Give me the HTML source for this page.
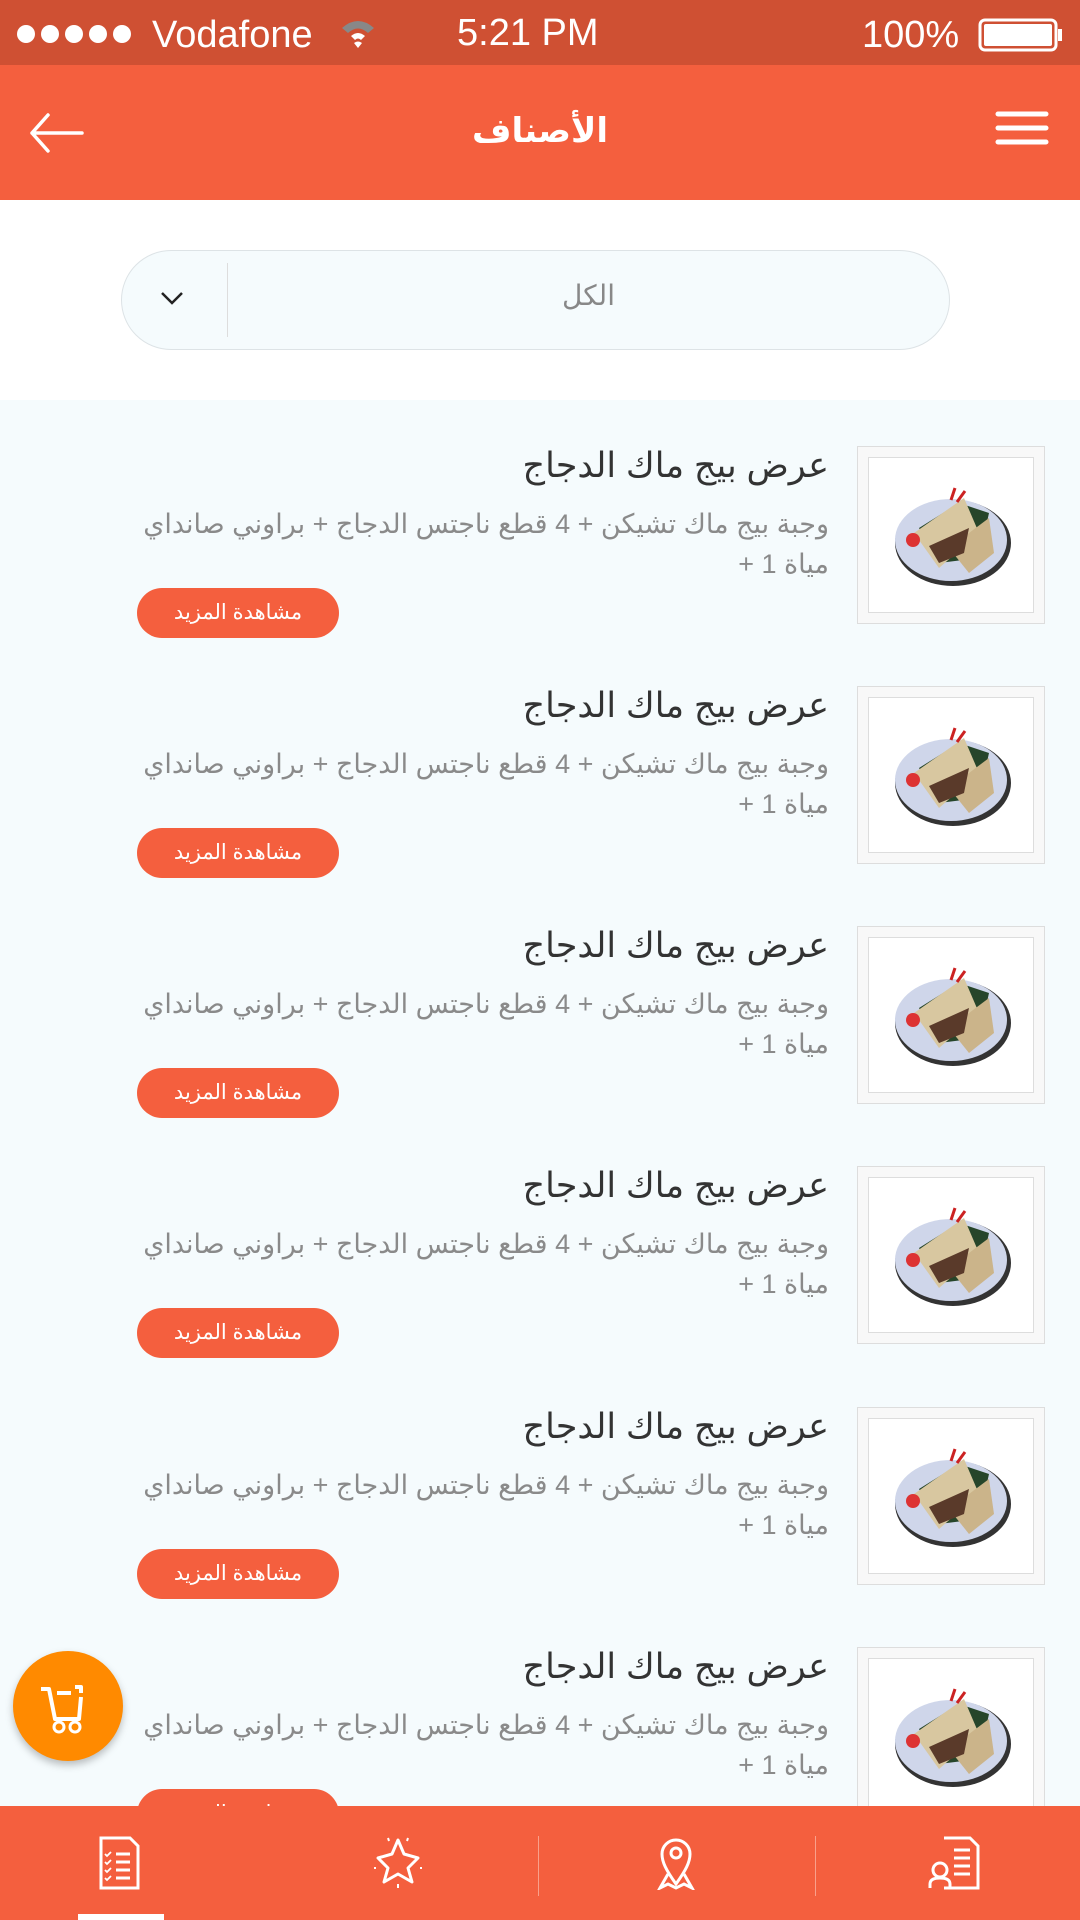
<!DOCTYPE html>
<html><head><meta charset="utf-8"><style>
*{margin:0;padding:0;box-sizing:border-box}
body{width:1080px;height:1920px;overflow:hidden;background:#f5fbfd;font-family:"Liberation Sans","DejaVu Sans",sans-serif;position:relative}
.sb{position:absolute;left:0;top:0;width:1080px;height:65px;background:#cf5033;color:#fff;font-size:38px}
.hd{position:absolute;left:0;top:65px;width:1080px;height:135px;background:#f45f3e}
.wh{position:absolute;left:0;top:200px;width:1080px;height:200px;background:#fff}
.dd{position:absolute;left:121px;top:250px;width:829px;height:100px;border:1.5px solid #dde3e6;border-radius:50px;background:#f5fbfd}
.item{position:absolute;left:0;width:1080px;height:240px}
.img{position:absolute;left:857px;top:0;width:188px;height:178px;border:1.5px solid #ddd;background:#f8f8f8}
.img .in{position:absolute;left:10px;top:10px;width:166px;height:156px;border:1.5px solid #ddd;background:#fff}
.t{position:absolute;right:251px;top:0;font-size:35px;color:#333;direction:rtl;white-space:nowrap}
.d{position:absolute;right:251px;top:58px;width:720px;font-size:27px;line-height:40px;color:#8a8a8a;direction:rtl;text-align:right}
.b{position:absolute;left:137px;top:142px;width:202px;height:50px;border-radius:25px;background:#f45f3e;color:#fff;font-size:21px;text-align:center;line-height:50px;direction:rtl}
.nav{position:absolute;left:0;top:1806px;width:1080px;height:114px;background:#f45f3e}
</style></head><body>
<div class="sb">
<svg style="position:absolute;left:14px;top:22px" width="120" height="24"><g fill="#fff"><circle cx="12" cy="12" r="9"/><circle cx="36" cy="12" r="9"/><circle cx="60" cy="12" r="9"/><circle cx="84" cy="12" r="9"/><circle cx="108" cy="12" r="9"/></g></svg>
<span style="position:absolute;left:152px;top:14px">Vodafone</span>
<svg style="position:absolute;left:340px;top:18px" width="36" height="32"><path d="M2 10 Q18 -4 34 10 L28 15 Q18 6 8 15Z" fill="#888"/><path d="M11 18 Q18 12 25 18 L21 22 Q18 19 15 22Z" fill="#fff"/><path d="M14 25 L18 30 L22 25 Q18 22 14 25Z" fill="#fff"/></svg>
<span style="position:absolute;left:457px;top:12px">5:21 PM</span>
<span style="position:absolute;left:862px;top:14px">100%</span>
<svg style="position:absolute;left:978px;top:18px" width="86" height="34"><rect x="2" y="2" width="76" height="30" rx="5" fill="none" stroke="#fff" stroke-width="3"/><rect x="6" y="6" width="68" height="22" rx="2" fill="#fff"/><rect x="80" y="11" width="4" height="12" fill="#fff"/></svg>
</div>
<div class="hd">
<svg style="position:absolute;left:28px;top:48px" width="56" height="40"><path d="M54 20H4M20 2 4 20 20 38" fill="none" stroke="#fff" stroke-width="3.5" stroke-linecap="round" stroke-linejoin="round"/></svg>
<div style="position:absolute;left:0;width:1080px;top:46px;text-align:center;color:#fff;font-size:34px;font-weight:bold;font-family:'DejaVu Sans',sans-serif">الأصناف</div>
<svg style="position:absolute;left:994px;top:45px" width="56" height="44"><g stroke="#fff" stroke-width="5" stroke-linecap="round"><path d="M4 4H52M4 18H52M4 32H52"/></g></svg>
</div>
<div class="wh"><div class="dd" style="top:50px">
<div style="position:absolute;left:105px;top:12px;width:1px;height:74px;background:#ddd"></div>
<svg style="position:absolute;left:38px;top:40px" width="24" height="16"><path d="M2 2 12 12 22 2" fill="none" stroke="#222" stroke-width="2.5"/></svg>
<div style="position:absolute;left:106px;right:0;top:28px;text-align:center;font-size:28px;color:#888">الكل</div>
</div></div>

<svg width="0" height="0" style="position:absolute"><defs><g id="food"><ellipse cx="84" cy="85" rx="58" ry="43" fill="#333"/><ellipse cx="82" cy="82" rx="56" ry="41" fill="#cfd6ea"/><path d="M50 70 L90 45 L120 55 L110 100 L70 105Z" fill="#26452a"/><path d="M45 75 L95 40 L110 75 L70 110Z" fill="#d8c7a0"/><path d="M80 90 L120 60 L125 95 L100 115Z" fill="#cbb48a"/><path d="M60 88 L100 70 L95 95 L70 105Z" fill="#5a3a2a"/><circle cx="44" cy="82" r="7" fill="#d33"/><path d="M82 42 L86 30 M88 44 L96 33" stroke="#c22" stroke-width="3"/></g></defs></svg>

<div class="item" style="top:446px"><div class="img"><div class="in"><svg width="166" height="156"><use href="#food"/></svg></div></div><div class="t">عرض بيج ماك الدجاج</div><div class="d">وجبة بيج ماك تشيكن + 4 قطع ناجتس الدجاج + براوني صانداي مياة 1 +</div><div class="b">مشاهدة المزيد</div></div>
<div class="item" style="top:686px"><div class="img"><div class="in"><svg width="166" height="156"><use href="#food"/></svg></div></div><div class="t">عرض بيج ماك الدجاج</div><div class="d">وجبة بيج ماك تشيكن + 4 قطع ناجتس الدجاج + براوني صانداي مياة 1 +</div><div class="b">مشاهدة المزيد</div></div>
<div class="item" style="top:926px"><div class="img"><div class="in"><svg width="166" height="156"><use href="#food"/></svg></div></div><div class="t">عرض بيج ماك الدجاج</div><div class="d">وجبة بيج ماك تشيكن + 4 قطع ناجتس الدجاج + براوني صانداي مياة 1 +</div><div class="b">مشاهدة المزيد</div></div>
<div class="item" style="top:1166px"><div class="img"><div class="in"><svg width="166" height="156"><use href="#food"/></svg></div></div><div class="t">عرض بيج ماك الدجاج</div><div class="d">وجبة بيج ماك تشيكن + 4 قطع ناجتس الدجاج + براوني صانداي مياة 1 +</div><div class="b">مشاهدة المزيد</div></div>
<div class="item" style="top:1407px"><div class="img"><div class="in"><svg width="166" height="156"><use href="#food"/></svg></div></div><div class="t">عرض بيج ماك الدجاج</div><div class="d">وجبة بيج ماك تشيكن + 4 قطع ناجتس الدجاج + براوني صانداي مياة 1 +</div><div class="b">مشاهدة المزيد</div></div>
<div class="item" style="top:1647px"><div class="img"><div class="in"><svg width="166" height="156"><use href="#food"/></svg></div></div><div class="t">عرض بيج ماك الدجاج</div><div class="d">وجبة بيج ماك تشيكن + 4 قطع ناجتس الدجاج + براوني صانداي مياة 1 +</div><div class="b">مشاهدة المزيد</div></div>

<div style="position:absolute;left:13px;top:1651px;width:110px;height:110px;border-radius:50%;background:#ff8a00;box-shadow:0 4px 8px rgba(0,0,0,.25)">
<svg style="position:absolute;left:24px;top:30px" width="60" height="54"><path d="M4 8H12L18 38H42L44 16 M20 12H34 M38 6H44V12" fill="none" stroke="#fff" stroke-width="4" stroke-linejoin="round"/><circle cx="22" cy="46" r="5" fill="none" stroke="#fff" stroke-width="3"/><circle cx="38" cy="46" r="5" fill="none" stroke="#fff" stroke-width="3"/></svg>
</div>

<div class="nav">
<div style="position:absolute;left:538px;top:30px;width:1px;height:60px;background:#f9a08b"></div>
<div style="position:absolute;left:815px;top:30px;width:1px;height:60px;background:#f9a08b"></div>
<svg style="position:absolute;left:98px;top:30px" width="44" height="54"><path d="M3 2H32L40 10V52H3Z" fill="none" stroke="#fff" stroke-width="3"/><g stroke="#fff" stroke-width="3"><path d="M18 18H32M18 26H32M18 34H32M18 42H32"/><path d="M7 18l2 2 4-4M7 26l2 2 4-4M7 34l2 2 4-4M7 42l2 2 4-4" stroke-width="1.8" fill="none"/></g></svg>
<svg style="position:absolute;left:372px;top:30px" width="52" height="54"><path d="M26 4 L32 18 L46 22 L36 32 L40 46 L26 38 L12 46 L16 32 L6 22 L20 18Z" fill="none" stroke="#fff" stroke-width="3" stroke-linejoin="round"/><path d="M26 48v4M2 32h2M48 32h2M16 2l1 3M36 2l-1 3" stroke="#fff" stroke-width="2"/></svg>
<svg style="position:absolute;left:656px;top:30px" width="40" height="54"><path d="M20 48 C10 34 6 26 6 18 A14 14 0 0 1 34 18 C34 26 30 34 20 48Z" fill="none" stroke="#fff" stroke-width="3"/><circle cx="20" cy="17" r="5" fill="none" stroke="#fff" stroke-width="3"/><path d="M12 38 L4 52 L12 48 L20 52 L28 48 L36 52 L28 38" fill="none" stroke="#fff" stroke-width="3"/></svg>
<svg style="position:absolute;left:928px;top:30px" width="54" height="54"><path d="M16 2H42L50 10V52H16" fill="none" stroke="#fff" stroke-width="3"/><path d="M26 14H42M26 22H42M26 30H42M26 38H42" stroke="#fff" stroke-width="3"/><circle cx="12" cy="34" r="7" fill="#f45f3e" stroke="#fff" stroke-width="3"/><path d="M2 52V48Q2 42 12 42Q22 42 22 48V52" fill="none" stroke="#fff" stroke-width="3"/></svg>
<div style="position:absolute;left:78px;top:108px;width:86px;height:6px;background:#fff"></div>
</div>
</body></html>
